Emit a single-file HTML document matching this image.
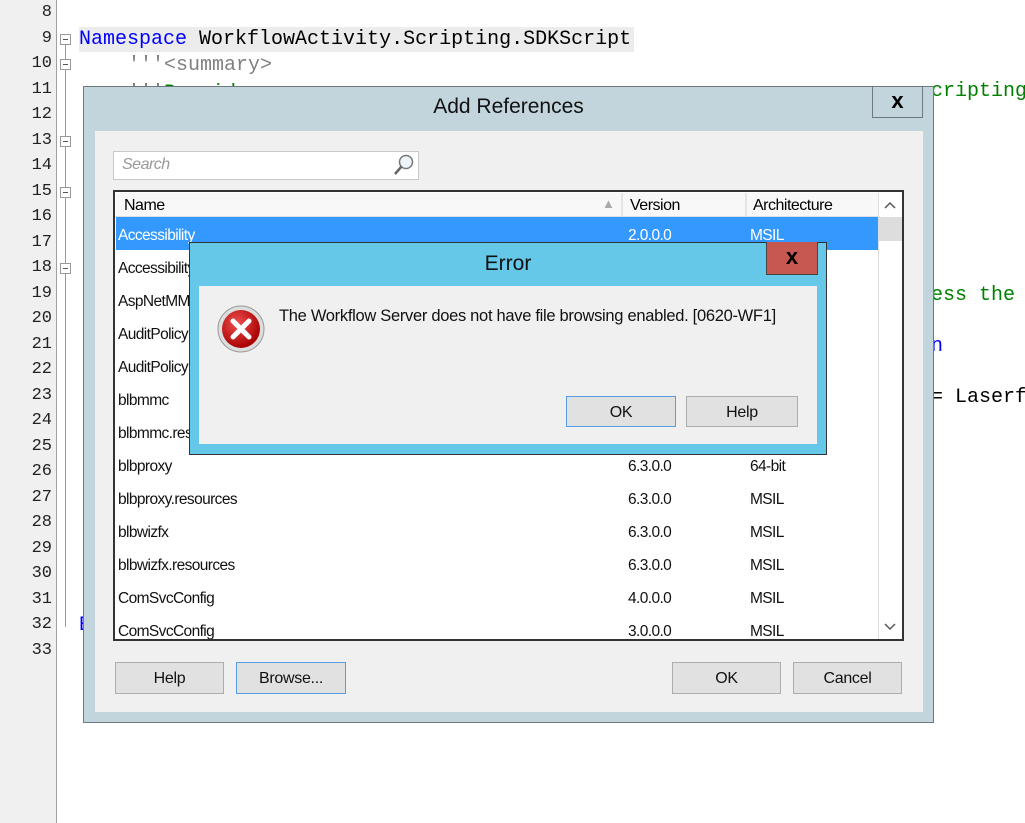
<!DOCTYPE html>
<html><head><style>
*{margin:0;padding:0;box-sizing:border-box}
body{width:1025px;height:823px;background:#fff;position:relative;overflow:hidden;font-family:"Liberation Sans",sans-serif}
.gut{position:absolute;left:0;top:0;width:57px;height:823px;background:#f0f0f0;border-right:1px solid #a0a0a0}
.ln{position:absolute;left:0;width:52px;text-align:right;font:17px "Liberation Mono",monospace;color:#222}
.fold{position:absolute;left:60px;width:11px;height:11px;border:1px solid #999;background:#fff}
.fold:after{content:"";position:absolute;left:2px;top:4px;width:5px;height:1px;background:#555}
.vl{position:absolute;left:65px;width:1px;background:#999}
.code{position:absolute;font:20px "Liberation Mono",monospace;white-space:pre}
.abs{position:absolute}
.btn{position:absolute;background:#e1e1e1;border:1px solid #adadad;font-size:16px;text-align:center;color:#111;letter-spacing:-.3px}
.row{position:absolute;left:116px;width:762px;height:33px;font-size:15.5px;letter-spacing:-.6px;color:#111}
.row span{position:absolute;top:10px}
</style></head><body>
<div class="gut"></div>
<div class="abs" style="left:79px;top:27px;width:555px;height:25px;background:#ececec"></div>
<div class="ln" style="top:3px">8</div><div class="ln" style="top:29px">9</div><div class="ln" style="top:54px">10</div><div class="ln" style="top:80px">11</div><div class="ln" style="top:105px">12</div><div class="ln" style="top:131px">13</div><div class="ln" style="top:156px">14</div><div class="ln" style="top:182px">15</div><div class="ln" style="top:207px">16</div><div class="ln" style="top:233px">17</div><div class="ln" style="top:258px">18</div><div class="ln" style="top:284px">19</div><div class="ln" style="top:309px">20</div><div class="ln" style="top:335px">21</div><div class="ln" style="top:360px">22</div><div class="ln" style="top:386px">23</div><div class="ln" style="top:411px">24</div><div class="ln" style="top:437px">25</div><div class="ln" style="top:462px">26</div><div class="ln" style="top:488px">27</div><div class="ln" style="top:513px">28</div><div class="ln" style="top:539px">29</div><div class="ln" style="top:564px">30</div><div class="ln" style="top:590px">31</div><div class="ln" style="top:615px">32</div><div class="ln" style="top:641px">33</div>
<div class="vl" style="top:42px;height:585px"></div>
<div class="fold" style="top:34px"></div><div class="fold" style="top:59px"></div><div class="fold" style="top:136px"></div><div class="fold" style="top:187px"></div><div class="fold" style="top:263px"></div>
<div class="code" style="left:79px;top:28px"><span style="color:#00f">Namespace</span> WorkflowActivity.Scripting.SDKScript</div>
<div class="code" style="left:128px;top:54px;color:#808080">'''&lt;summary&gt;</div>
<div class="code" style="left:128px;top:82px;color:#808080">'''<span style="color:#008000">Provides</span></div>
<div class="code" style="left:931px;top:80px;color:#008000">cripting</div>
<div class="code" style="left:931px;top:284px;color:#008000">ess the</div>
<div class="code" style="left:931px;top:335px;color:#00f">n</div>
<div class="code" style="left:931px;top:386px">= Laserf</div>
<div class="code" style="left:79px;top:614px;color:#00f">E</div>

<div class="abs" style="left:83px;top:86px;width:851px;height:637px;background:#c3d5dc;border:1px solid #6e7a80"></div>
<div class="abs" style="left:83px;top:95px;width:851px;text-align:center;font-size:21px;color:#111">Add References</div>
<div class="abs" style="left:872px;top:86px;width:51px;height:32px;border:1px solid #6e7a80;border-top:none;text-align:center;font:bold 22px/30px 'Liberation Sans',sans-serif">x</div>
<div class="abs" style="left:95px;top:131px;width:828px;height:581px;background:#f0f0f0"></div>
<div class="abs" style="left:113px;top:151px;width:306px;height:29px;background:#fff;border:1px solid #c8c8c8;font-style:italic;color:#999;font-size:16px;padding:4px 8px;letter-spacing:-.5px">Search</div>
<svg class="abs" style="left:392px;top:153px" width="24" height="24"><circle cx="14" cy="9" r="6.5" fill="#eef4f8" stroke="#777" stroke-width="1.5"/><line x1="9.5" y1="13.5" x2="3" y2="21" stroke="#666" stroke-width="2.5"/></svg>
<div class="abs" style="left:113px;top:190px;width:791px;height:451px;background:#fff;border:2px solid #333"></div>
<div class="abs" style="left:116px;top:193px;width:762px;height:24px;background:#f8f8f8;border-bottom:1px solid #ddd;font-size:16px;letter-spacing:-.5px">
<span class="abs" style="left:8px;top:4px">Name</span><span class="abs" style="left:486px;top:3px;color:#aaa;font-size:13px">▲</span>
<span class="abs" style="left:505px;top:0;height:23px;border-left:2px solid #e4e4e4"></span><span class="abs" style="left:514px;top:4px">Version</span>
<span class="abs" style="left:629px;top:0;height:23px;border-left:2px solid #e4e4e4"></span><span class="abs" style="left:637px;top:4px">Architecture</span></div>
<div class="abs" style="left:878px;top:193px;width:24px;height:446px;background:#fff;border-left:1px solid #ddd"></div>
<div class="abs" style="left:879px;top:217px;width:23px;height:24px;background:#ddd"></div>
<svg class="abs" style="left:882px;top:198px" width="16" height="14"><path d="M3 10L8 5L13 10" fill="none" stroke="#555" stroke-width="1.5"/></svg>
<svg class="abs" style="left:882px;top:620px" width="16" height="14"><path d="M3 4L8 9L13 4" fill="none" stroke="#555" stroke-width="1.5"/></svg>
<div class="row" style="top:217px;background:#3399ff;color:#fff"><span style="left:2px">Accessibility</span><span style="left:512px">2.0.0.0</span><span style="left:634px">MSIL</span></div>
<div class="row" style="top:250px"><span style="left:2px">Accessibility</span></div>
<div class="row" style="top:283px"><span style="left:2px">AspNetMMC</span></div>
<div class="row" style="top:316px"><span style="left:2px">AuditPolicy</span></div>
<div class="row" style="top:349px"><span style="left:2px">AuditPolicy</span></div>
<div class="row" style="top:382px"><span style="left:2px">blbmmc</span></div>
<div class="row" style="top:415px"><span style="left:2px">blbmmc.resources</span></div>
<div class="row" style="top:448px"><span style="left:2px">blbproxy</span><span style="left:512px">6.3.0.0</span><span style="left:634px">64-bit</span></div>
<div class="row" style="top:481px"><span style="left:2px">blbproxy.resources</span><span style="left:512px">6.3.0.0</span><span style="left:634px">MSIL</span></div>
<div class="row" style="top:514px"><span style="left:2px">blbwizfx</span><span style="left:512px">6.3.0.0</span><span style="left:634px">MSIL</span></div>
<div class="row" style="top:547px"><span style="left:2px">blbwizfx.resources</span><span style="left:512px">6.3.0.0</span><span style="left:634px">MSIL</span></div>
<div class="row" style="top:580px"><span style="left:2px">ComSvcConfig</span><span style="left:512px">4.0.0.0</span><span style="left:634px">MSIL</span></div>
<div class="row" style="top:613px;height:26px;overflow:hidden"><span style="left:2px">ComSvcConfig</span><span style="left:512px">3.0.0.0</span><span style="left:634px">MSIL</span></div>
<div class="btn" style="left:115px;top:662px;width:109px;height:32px;line-height:32px">Help</div>
<div class="btn" style="left:236px;top:662px;width:110px;height:32px;line-height:32px;border-color:#569de5">Browse...</div>
<div class="btn" style="left:672px;top:662px;width:109px;height:32px;line-height:32px">OK</div>
<div class="btn" style="left:793px;top:662px;width:109px;height:32px;line-height:32px">Cancel</div>

<div class="abs" style="left:189px;top:242px;width:638px;height:213px;background:#65c8e8;border:1px solid #333"></div>
<div class="abs" style="left:189px;top:252px;width:638px;text-align:center;font-size:21px;color:#111">Error</div>
<div class="abs" style="left:766px;top:242px;width:52px;height:33px;background:#c75850;border:1px solid #444;border-top:none;text-align:center;font:bold 22px/30px 'Liberation Sans',sans-serif">x</div>
<div class="abs" style="left:199px;top:286px;width:618px;height:158px;background:#f0f0f0"></div>
<svg class="abs" style="left:216px;top:304px" width="50" height="50"><defs><radialGradient id="g" cx="40%" cy="35%" r="65%"><stop offset="0" stop-color="#f05050"/><stop offset="1" stop-color="#a80000"/></radialGradient></defs><circle cx="25" cy="25" r="23" fill="#ddd" stroke="#999"/><circle cx="25" cy="25" r="19" fill="url(#g)"/><path d="M17 17L33 33M33 17L17 33" stroke="#fff" stroke-width="5" stroke-linecap="round"/></svg>
<div class="abs" style="left:279px;top:307px;font-size:16.5px;color:#111;letter-spacing:-.3px">The Workflow Server does not have file browsing enabled. [0620-WF1]</div>
<div class="btn" style="left:566px;top:396px;width:110px;height:31px;line-height:31px;border-color:#569de5">OK</div>
<div class="btn" style="left:686px;top:396px;width:112px;height:31px;line-height:31px">Help</div>
</body></html>
